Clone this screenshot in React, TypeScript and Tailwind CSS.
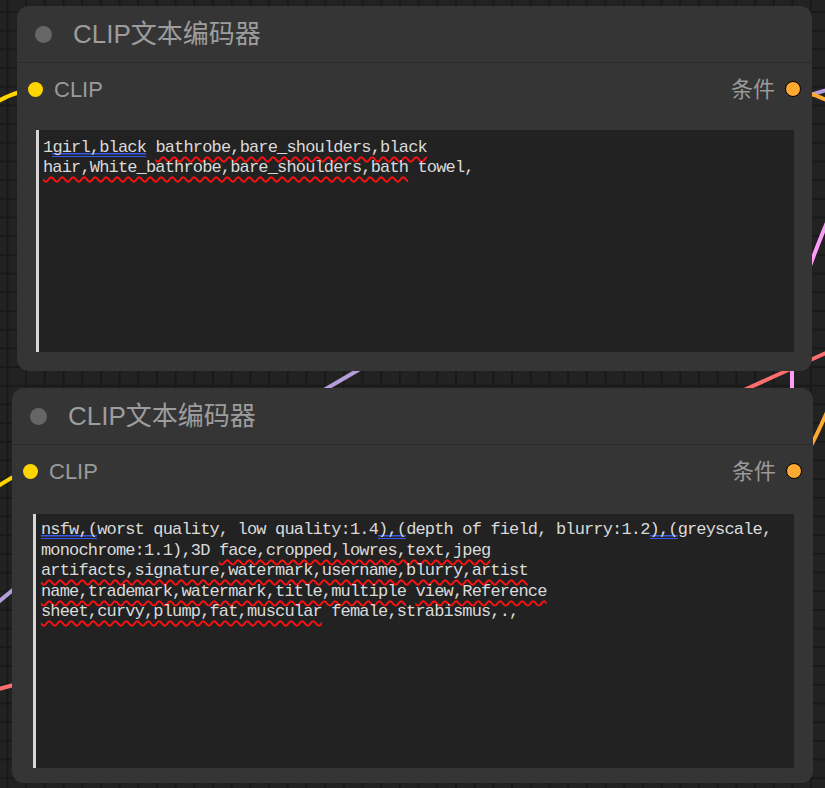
import React from "react";

const W = "underline decoration-wavy decoration-[#ff1010] decoration-[length:1.5px] underline-offset-[4px] [text-decoration-skip-ink:none]";
const B = "bg-no-repeat bg-[linear-gradient(#3458e8,#3458e8),linear-gradient(#3458e8,#3458e8)] bg-[size:100%_1.5px,100%_1.5px] bg-[position:0_15px,0_17.5px]";

function Dot({ color }: { color: "yellow" | "orange" }) {
  return color === "yellow" ? (
    <span className="block w-[15px] h-[15px] rounded-full bg-[#FFD500] shrink-0" />
  ) : (
    <span className="block w-[16px] h-[16px] rounded-full bg-[#FFA931] border-[1.5px] border-black shrink-0" />
  );
}

function Header() {
  return (
    <div className="h-[57px] flex items-center pl-[18px] border-b border-[#2b2b2b] shrink-0">
      <span className="block w-[17px] h-[17px] rounded-full bg-[#666666]" />
      <span className="ml-[21px] text-[26px] text-[#9d9d9d] font-['Liberation_Sans','Noto_Sans_CJK_SC',sans-serif] leading-none">
        CLIP文本编码器
      </span>
    </div>
  );
}

function Slots() {
  return (
    <div className="h-[30px] flex items-center justify-between pl-[11px] pr-[11px] font-['Liberation_Sans','Noto_Sans_CJK_SC',sans-serif] text-[22px] text-[#9a9a9a]">
      <div className="flex items-center gap-[11px]">
        <Dot color="yellow" />
        <span>CLIP</span>
      </div>
      <div className="flex items-center gap-[10px]">
        <span>条件</span>
        <Dot color="orange" />
      </div>
    </div>
  );
}

export default function App() {
  return (
    <div className="relative w-[825px] h-[788px] overflow-hidden bg-[#222222] bg-[linear-gradient(to_right,#191919_2px,transparent_2px),linear-gradient(to_bottom,#191919_2px,transparent_2px)] bg-[size:18.7px_18.7px] bg-[position:6.5px_11px]">
      <svg className="absolute inset-0" width="825" height="788" fill="none" strokeLinecap="round">
        <path d="M -30 122 C -5 100, 15 90, 35 90" stroke="#FFD500" strokeWidth="4" />
        <path d="M 800 98 L 840 86" stroke="#B39DDB" strokeWidth="4" />
        <path d="M 793 90 C 810 92, 822 98, 845 108" stroke="#FFA931" strokeWidth="4" />
        <path d="M 845 180 C 815 250, 792 300, 792 360 L 792 400" stroke="#FF9CF9" strokeWidth="4" />
        <path d="M 870 333 L 700 410" stroke="#FF6E6E" strokeWidth="4" />
        <path d="M 845 375 C 828 405, 818 440, 795 471" stroke="#FFA931" strokeWidth="4" />
        <path d="M 372 362 L 312 397" stroke="#B39DDB" strokeWidth="4" />
        <path d="M -25 500 C 0 486, 15 473, 31 471" stroke="#FFD500" strokeWidth="4" />
        <path d="M -20 617 L 25 580" stroke="#B39DDB" strokeWidth="4" />
        <path d="M -20 694 L 25 682" stroke="#FF6E6E" strokeWidth="4" />
      </svg>

      {/* top node */}
      <div className="absolute left-[17px] top-[6px] w-[795px] h-[365px] rounded-[12px] bg-[#353535] flex flex-col">
        <Header />
        <div className="mt-[11px]">
          <Slots />
        </div>
        <div className="mt-[26px] ml-[19px] mr-[18px] h-[222px] bg-[#222222] border-l-[3px] border-[#d6d6d6] pl-[4px] pt-[8px] font-['Liberation_Mono',monospace] text-[17px] tracking-[-0.84px] leading-[20px] text-[#dadada] whitespace-pre">
          <div>1<span className={B}>girl,black</span> <span className={W}>bathrobe,bare_shoulders,black</span></div>
          <div><span className={W}>hair,White_bathrobe,bare_shoulders,bath</span> towel,</div>
        </div>
      </div>

      {/* bottom node */}
      <div className="absolute left-[12px] top-[388px] w-[801px] h-[395px] rounded-[12px] bg-[#353535] flex flex-col">
        <Header />
        <div className="mt-[11px]">
          <Slots />
        </div>
        <div className="mt-[28px] ml-[21px] mr-[19px] h-[254px] bg-[#222222] border-l-[3px] border-[#d6d6d6] pl-[5px] pt-[6px] font-['Liberation_Mono',monospace] text-[17px] tracking-[-0.84px] leading-[20.5px] text-[#dadada] whitespace-pre">
          <div><span className={B}>nsfw,(</span>worst quality, low quality:1.4<span className={B}>),(</span>depth of field, blurry:1.2<span className={B}>),(</span>greyscale,</div>
          <div>monochrome:1.1),3D <span className={W}>face,cropped,lowres,text,jpeg</span></div>
          <div><span className={W}>artifacts,signature,watermark,username,blurry,artist</span></div>
          <div><span className={W}>name,trademark,watermark,title,multiple</span> <span className={W}>view,Reference</span></div>
          <div><span className={W}>sheet,curvy,plump,fat,muscular</span> female,strabismus,.,</div>
        </div>
      </div>
    </div>
  );
}
